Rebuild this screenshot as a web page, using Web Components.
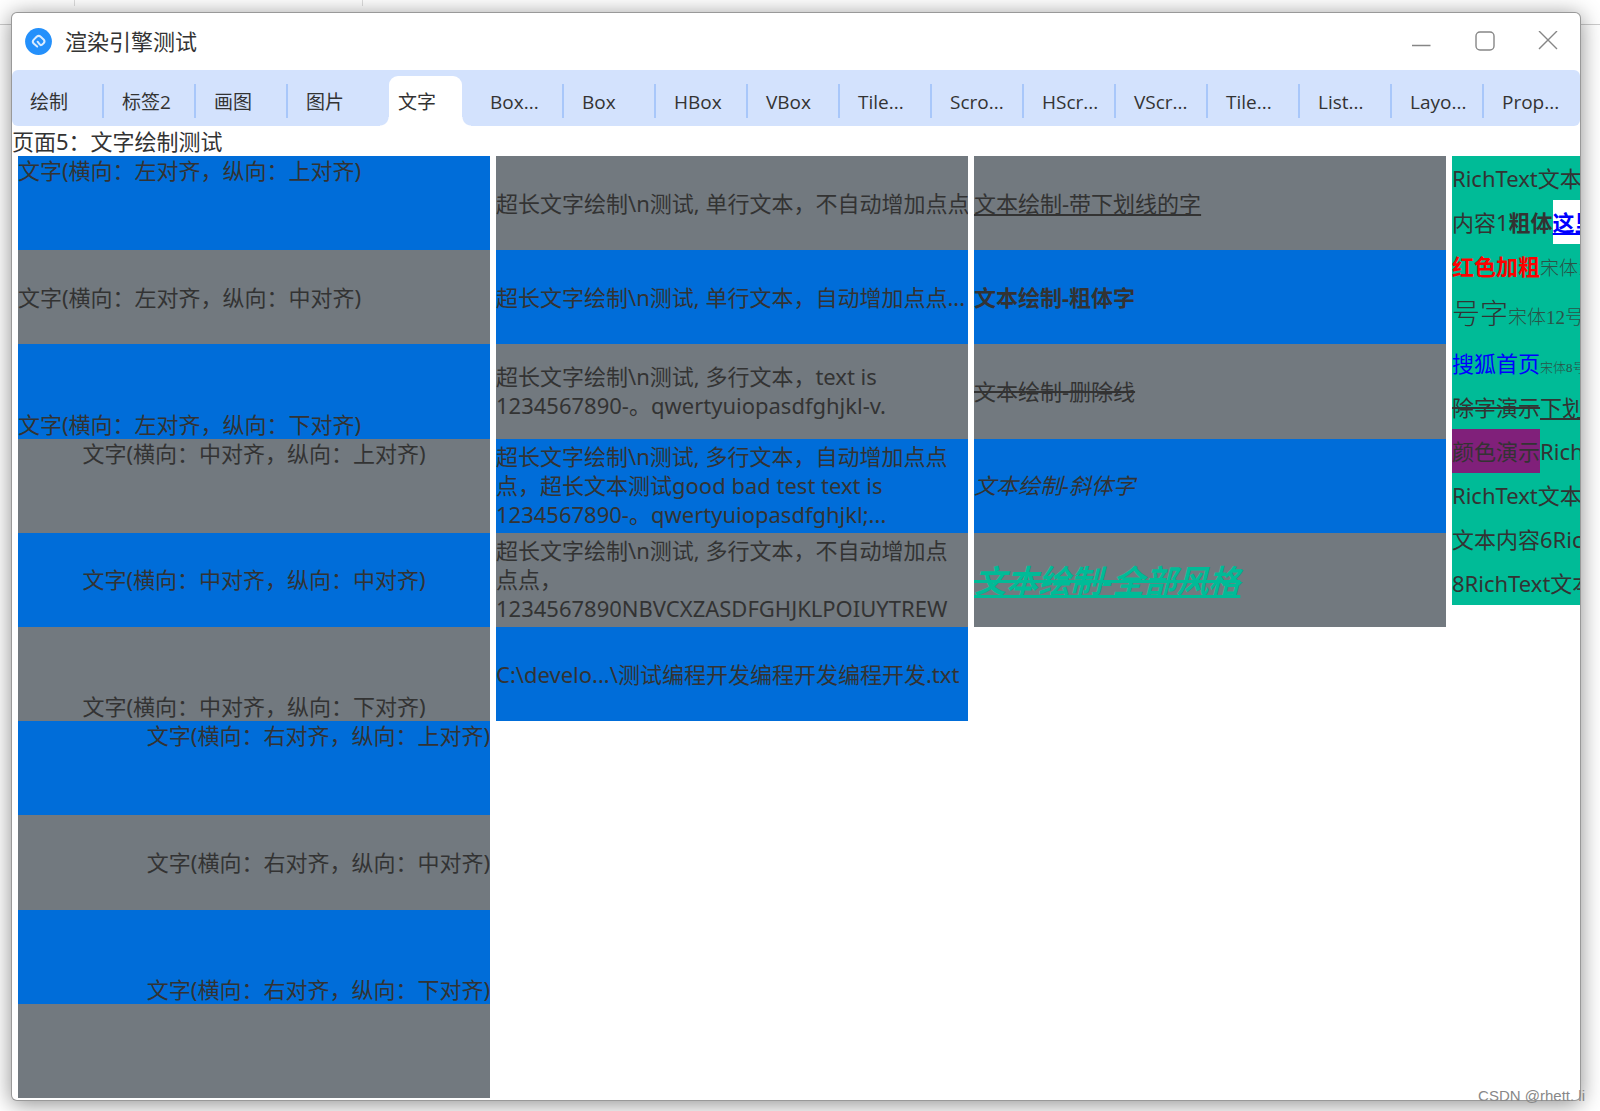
<!DOCTYPE html>
<html lang="zh-CN">
<head>
<meta charset="utf-8">
<title>渲染引擎测试</title>
<style>
  html, body { height: 100%; margin: 0; }
  body {
    background: #fff;
    color: #333;
    font: 22px/29px "Noto Sans", "Noto Sans CJK SC", sans-serif;
    overflow: hidden;
  }
</style>
</head>
<body>
<desk-top>
  <app-window caption="渲染引擎测试">
    <tab-strip slot="tabs">
      <tab-item>绘制</tab-item>
      <tab-item>标签2</tab-item>
      <tab-item>画图</tab-item>
      <tab-item last>图片</tab-item>
      <tab-item selected>文字</tab-item>
      <tab-item>Box...</tab-item>
      <tab-item>Box</tab-item>
      <tab-item>HBox</tab-item>
      <tab-item>VBox</tab-item>
      <tab-item>Tile...</tab-item>
      <tab-item>Scro...</tab-item>
      <tab-item>HScr...</tab-item>
      <tab-item>VScr...</tab-item>
      <tab-item>Tile...</tab-item>
      <tab-item>List...</tab-item>
      <tab-item>Layo...</tab-item>
      <tab-item last>Prop...</tab-item>
    </tab-strip>
    <text-page heading="页面5：文字绘制测试">
      <text-column>
        <text-cell v="top">文字(横向：左对齐，纵向：上对齐)</text-cell>
        <text-cell>文字(横向：左对齐，纵向：中对齐)</text-cell>
        <text-cell v="bottom">文字(横向：左对齐，纵向：下对齐)</text-cell>
        <text-cell h="center" v="top">文字(横向：中对齐，纵向：上对齐)</text-cell>
        <text-cell h="center">文字(横向：中对齐，纵向：中对齐)</text-cell>
        <text-cell h="center" v="bottom">文字(横向：中对齐，纵向：下对齐)</text-cell>
        <text-cell h="right" v="top">文字(横向：右对齐，纵向：上对齐)</text-cell>
        <text-cell h="right">文字(横向：右对齐，纵向：中对齐)</text-cell>
        <text-cell h="right" v="bottom">文字(横向：右对齐，纵向：下对齐)</text-cell>
        <text-cell></text-cell>
      </text-column>
      <text-column alt>
        <text-cell>超长文字绘制\n测试, 单行文本，不自动增加点点</text-cell>
        <text-cell>超长文字绘制\n测试, 单行文本，自动增加点点...</text-cell>
        <text-cell>超长文字绘制\n测试, 多行文本，text is<br>1234567890-。qwertyuiopasdfghjkl-v.</text-cell>
        <text-cell>超长文字绘制\n测试, 多行文本，自动增加点点<br>点，超长文本测试good bad test text is<br>1234567890-。qwertyuiopasdfghjkl;...</text-cell>
        <text-cell>超长文字绘制\n测试, 多行文本，不自动增加点<br>点点，<br>1234567890NBVCXZASDFGHJKLPOIUYTREW</text-cell>
        <text-cell>C:\develo...\测试编程开发编程开发编程开发.txt</text-cell>
      </text-column>
      <text-column alt>
        <text-cell look="underline">文本绘制-带下划线的字</text-cell>
        <text-cell look="bold">文本绘制-粗体字</text-cell>
        <text-cell look="strike">文本绘制-删除线</text-cell>
        <text-cell look="italic">文本绘制-斜体字</text-cell>
        <text-cell look="all">文本绘制-全部风格</text-cell>
      </text-column>
      <rich-panel></rich-panel>
    </text-page>
  </app-window>
  <page-mark slot="mark">CSDN @rhett. li</page-mark>
</desk-top>

<script>
const define = (name, html) => {
  const template = document.createElement('template');
  template.innerHTML = html;
  customElements.define(name, class extends HTMLElement {
    constructor() {
      super();
      this.attachShadow({ mode: 'open' }).append(template.content.cloneNode(true));
    }
    connectedCallback() {
      for (const node of this.shadowRoot.querySelectorAll('[data-text]'))
        node.textContent = this.getAttribute(node.dataset.text);
      const tab = this.shadowRoot.querySelector('[role=tab]');
      if (tab) tab.setAttribute('aria-selected', this.hasAttribute('selected'));
    }
  });
};

define('desk-top', `
  <style>
    :host { display: flex; flex-direction: column; position: relative; height: 100vh; box-sizing: border-box;
            padding: 13px 20px 11px 12px; overflow: hidden;
            background:
              linear-gradient(#ddd, #ddd) 74px 0 / 1px 6px no-repeat,
              linear-gradient(#ddd, #ddd) 362px 0 / 1px 6px no-repeat,
              linear-gradient(#ccc, #ccc) 0 24px / 100% 1px no-repeat, #fff; }
    ::slotted([slot=mark]) { position: absolute; right: 15px; bottom: 5px; }
  </style>
  <slot></slot><slot name="mark"></slot>`);

define('page-mark', `
  <style>:host { display: block; font: 15px/20px "Liberation Sans", sans-serif; color: #888; white-space: pre; }</style>
  <slot></slot>`);

define('app-window', `
  <style>
    :host { display: flex; flex-direction: column; flex: 1; min-height: 0; background: #fff; border-radius: 5px;
            overflow: hidden; box-shadow: 0 0 0 1px #999, 0 3px 22px 1px rgba(0,0,0,.45); }
    header { display: flex; align-items: center; gap: 13px; height: 57px; padding: 0 1px 0 13px; }
    h1 { flex: 1; margin: 0; font: inherit; }
    .logo { width: 27px; height: 27px; }
    .controls { display: flex; align-self: stretch; padding-bottom: 1px; }
    button { width: 63px; padding: 0; border: 0; background: none; display: flex; align-items: center; justify-content: center; }
    button svg { width: 20px; height: 20px; fill: none; stroke: #868686; stroke-width: 1.4; }
  </style>
  <header>
    <svg class="logo" viewBox="0 0 27 27" aria-hidden="true">
      <circle cx="13.5" cy="13.5" r="13.4" fill="#2490fb"/>
      <path d="M12.2 18.6 8.7 15.6Q6.8 13.6 8.8 11.600L11.600 8.800Q13.700 7 15.700 8.700L18.600 11.400Q20.400 13.400 18.600 15.300L16.700 16.900Q15.500 17.600 14.700 16.300L12.600 13.700" fill="none" stroke="#d9ebff" stroke-width="2" stroke-linecap="round"/>
    </svg>
    <h1 data-text="caption"></h1>
    <div class="controls">
      <button aria-label="最小化"><svg viewBox="0 0 20 20"><path d="M0 14.500H18.500"/></svg></button>
      <button aria-label="最大化"><svg viewBox="0 0 20 20"><rect x="1" y="1" width="18" height="18" rx="4"/></svg></button>
      <button aria-label="关闭"><svg viewBox="0 0 20 20"><path d="M1 0 19 18M19 0 1 18"/></svg></button>
    </div>
  </header>
  <slot name="tabs"></slot>
  <slot></slot>`);

define('tab-strip', `
  <style>:host { display: flex; flex: none; height: 56px; background: #d3e2fd; border-radius: 6px; overflow: hidden; }</style>
  <slot></slot>`);

define('tab-item', `
  <style>
    :host { display: flex; flex: 0 0 92px; padding: 6px 0 0; box-sizing: border-box; }
    button { display: flex; align-items: center; flex: 1; min-width: 0; padding: 2px 0 0 18px; border: 0; color: inherit;
             font: 19px/26px "Open Sans", "Noto Sans CJK SC", sans-serif; text-align: left; white-space: nowrap;
             background: linear-gradient(#a8c7fa, #a8c7fa) right 0 top 8px / 2px 34px no-repeat; }
    :host([last]) button { background: none; }
    :host([selected]) button { margin: 0 10px 0 9px; padding-left: 9px; background: #fff; border-radius: 9px 9px 0 0; }
    :host([selected]) { background:
      radial-gradient(circle at 0 0, transparent 8px, #fff 9px) left bottom / 9px 9px no-repeat,
      radial-gradient(circle at 100% 0, transparent 8px, #fff 9px) right 1px bottom / 9px 9px no-repeat; }
  </style>
  <button role="tab"><slot></slot></button>`);

define('text-page', `
  <style>
    :host { display: flex; flex-direction: column; flex: 1; min-height: 0; padding-bottom: 2px; }
    h2 { margin: 0; padding-top: 1px; font: inherit; }
    .columns { display: flex; flex: 1; min-height: 0; gap: 6px; padding-left: 6px; }
  </style>
  <h2 data-text="heading"></h2>
  <div class="columns"><slot></slot></div>`);

define('text-column', `
  <style>
    :host { display: grid; flex: 0 0 472px; grid-template-rows: repeat(10, minmax(0, 1fr)); }
    ::slotted(:nth-child(odd)) { background: #006dd9; }
    ::slotted(:nth-child(even)) { background: #72797f; }
    :host([alt]) ::slotted(:nth-child(odd)) { background: #72797f; }
    :host([alt]) ::slotted(:nth-child(even)) { background: #006dd9; }
  </style>
  <slot></slot>`);

define('text-cell', `
  <style>
    :host { display: flex; align-items: center; overflow: hidden; white-space: nowrap; }
    :host([h=center]) { justify-content: center; }
    :host([h=right]) { justify-content: flex-end; }
    :host([v=top]) { align-items: flex-start; }
    :host([v=bottom]) { align-items: flex-end; }
    :host([look=underline]) span { text-decoration: underline; }
    :host([look=bold]) span { font-weight: bold; }
    :host([look=strike]) span { text-decoration: line-through; }
    :host([look=italic]) span { font-style: italic; }
    :host([look=all]) span { font: italic bold 32px/42px "Noto Sans", "Noto Sans CJK SC", sans-serif; color: #00bb97;
                             padding-top: 3px; text-decoration: underline line-through; }
  </style>
  <span><slot></slot></span>`);

define('rich-panel', `
  <style>
    :host { display: block; flex: 1; min-width: 0; align-self: flex-start; overflow: hidden; background: #00bb97;
            line-height: 44px; white-space: nowrap; }
    p { margin: 0; height: 44px; }
    .tall { height: 53px; line-height: 53px; }
    a { color: #00f; text-decoration: none; }
    .here { display: inline-block; background: #fff; font-weight: bold; text-decoration: underline; }
    .red { color: #f00; }
    .kai { font-family: "Liberation Serif", "Noto Sans CJK SC", serif; font-size: 28px; font-weight: 300; }
    .song { font-family: "Liberation Serif", "Noto Sans CJK SC", serif; font-size: 19px; font-weight: 300; color: #2a5348; }
    .small { font-size: 13px; }
    .purple { display: inline-block; background: #80207a; }
  </style>
  <p>RichText文本</p>
  <p>内容1<b>粗体</b><a class="here" href="#">这里</a></p>
  <p><b class="red">红色加粗</b><span class="song">宋体1</span></p>
  <p class="tall"><span class="kai">号字</span><span class="song">宋体12号</span></p>
  <p><a href="#">搜狐首页</a><span class="song small">宋体8号</span></p>
  <p><s>除字演示</s><u>下划</u></p>
  <p><span class="purple">颜色演示</span>Rich</p>
  <p>RichText文本</p>
  <p>文本内容6Rich</p>
  <p>8RichText文本</p>`);
</script>
</body>
</html>
